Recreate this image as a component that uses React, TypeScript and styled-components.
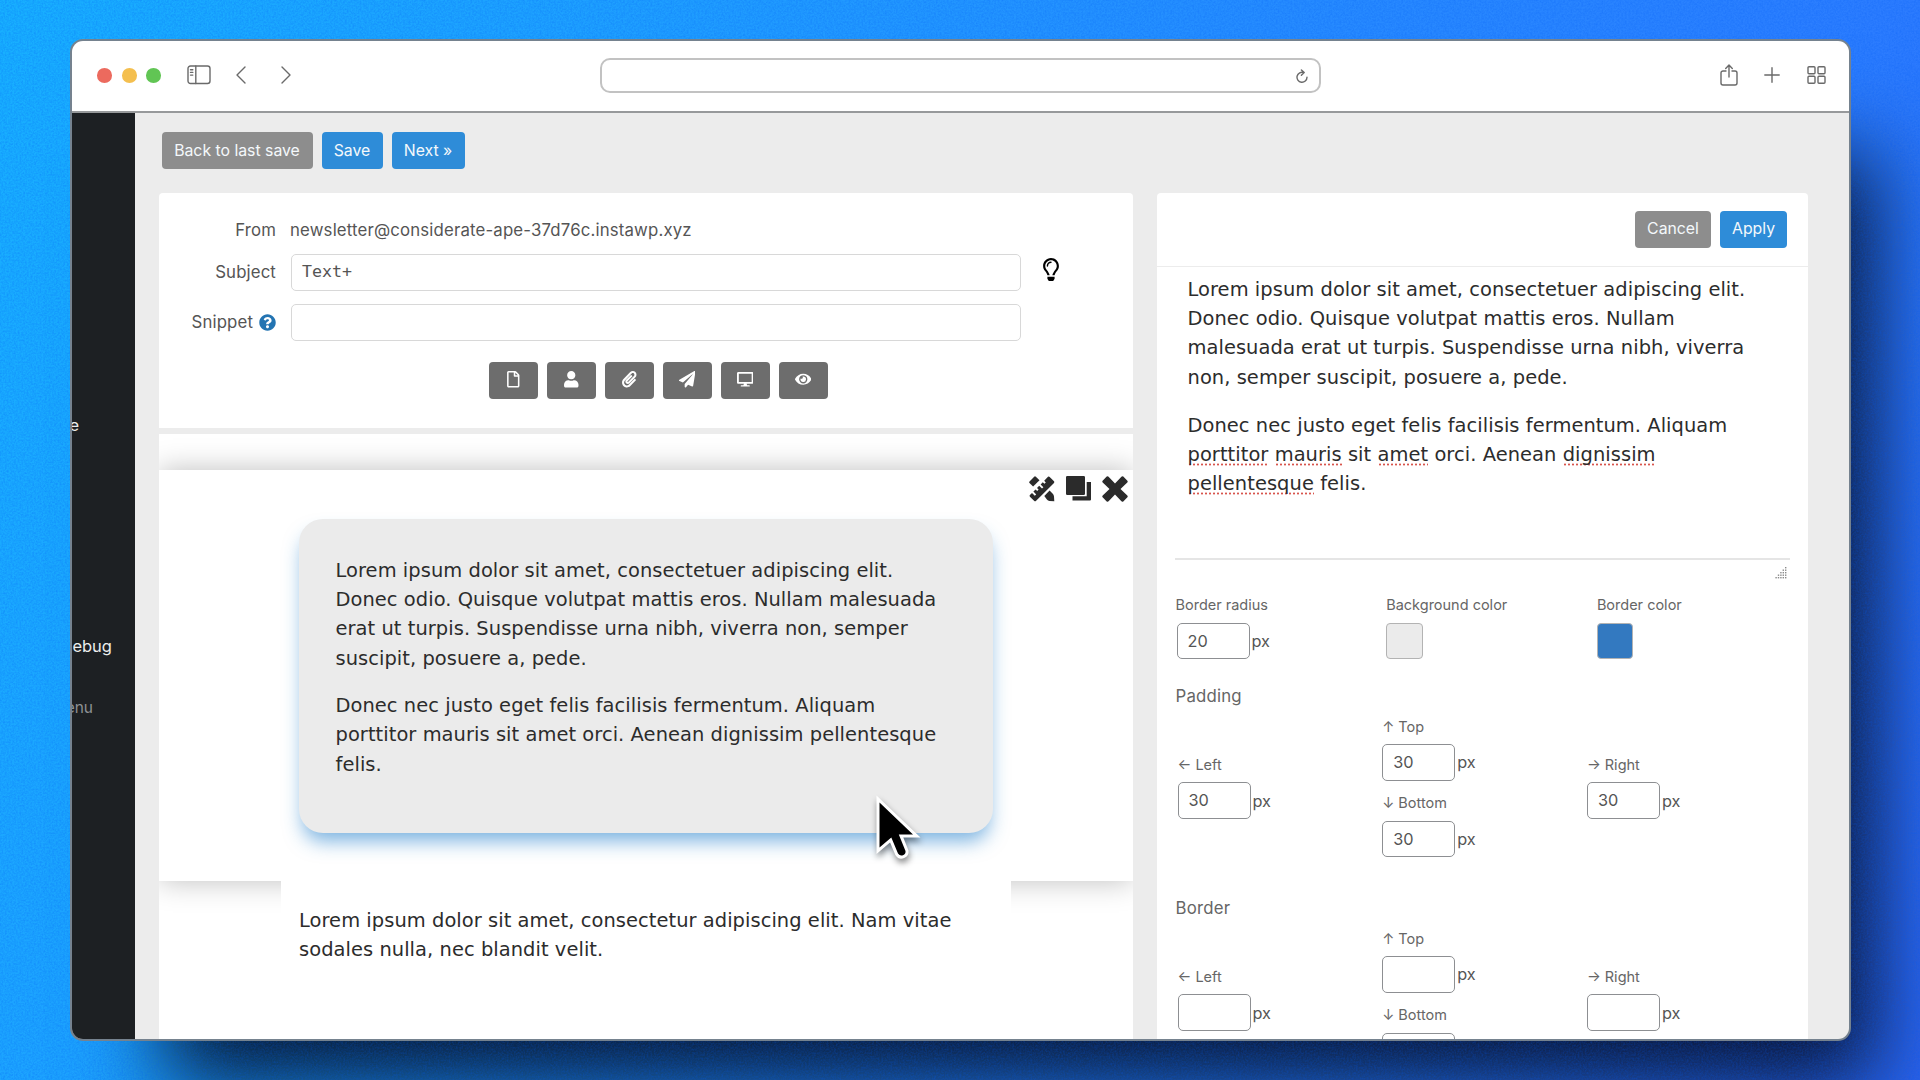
import React from "react";
import styled, { createGlobalStyle, css } from "styled-components";
import {
  FaRegFile,
  FaUser,
  FaPaperclip,
  FaPaperPlane,
  FaDesktop,
  FaEye,
  FaRegLightbulb,
  FaQuestionCircle,
} from "react-icons/fa";

const Global = createGlobalStyle`
  * { box-sizing: border-box; }
  body { margin: 0; overflow: hidden; font-family: Inter, "Liberation Sans", sans-serif; color: #555; }
  p { margin: 0; }
`;

const Desktop = styled.div`
  position: relative;
  width: 1920px;
  height: 1080px;
  padding: 39px 0 0 70px;
  overflow: hidden;
  background: linear-gradient(112deg, #18b0ff 0%, #1f9fff 28%, #278aff 58%, #2c7dff 80%, #2d66f2 100%);
`;

const Grain = styled.svg`
  position: absolute;
  inset: 0;
  width: 1920px;
  height: 1080px;
  opacity: 0.3;
  pointer-events: none;
`;

const Window = styled.div`
  position: relative;
  display: flex;
  flex-direction: column;
  width: 1781px;
  height: 1002px;
  border: 2px solid #75828f;
  border-radius: 13px;
  box-shadow: 58px 80px 80px -36px rgba(4, 8, 24, 0.9);
  background: #75828f;
`;

const TitleBar = styled.header`
  display: flex;
  align-items: center;
  flex: none;
  height: 72px;
  padding: 0 23px 2px 25px;
  background: #fff;
  border-bottom: 2px solid #97999b;
  border-radius: 11px 11px 0 0;
`;

const Lights = styled.div`
  display: flex;
  gap: 9.6px;
  margin: 1px 26px 0 0;
`;

const Light = styled.span<{ $color: string }>`
  width: 15px;
  height: 14.5px;
  border-radius: 50%;
  background: ${(p) => p.$color};
`;

const BarIcon = styled.svg<{ $gap?: number }>`
  flex: none;
  margin-left: ${(p) => p.$gap ?? 0}px;
  fill: none;
  stroke: #6a6a6a;
  stroke-width: 1.4;
  stroke-linecap: round;
  stroke-linejoin: round;
`;

const Address = styled.div`
  display: flex;
  align-items: center;
  justify-content: flex-end;
  width: 721px;
  height: 35px;
  margin: 0 auto 0 308px;
  padding: 2px 10px 0 0;
  border: 2px solid #c2c2c2;
  border-radius: 10px;
`;

const Page = styled.div`
  display: flex;
  flex: 1;
  min-height: 0;
  overflow: hidden;
  background: #ececec;
  border-radius: 0 0 11px 11px;
`;

const Sidebar = styled.nav`
  flex: none;
  width: 63px;
  background: #1d2023;
  overflow: hidden;
  padding-top: 300.5px;
`;

const MenuItem = styled.div<{ $right: number; $gap?: number; $muted?: boolean }>`
  display: flex;
  justify-content: flex-end;
  width: ${(p) => p.$right}px;
  height: 22px;
  line-height: 22px;
  margin-bottom: ${(p) => p.$gap ?? 0}px;
  font-size: ${(p) => (p.$muted ? 15.5 : 16.5)}px;
  color: ${(p) => (p.$muted ? "#8d9194" : "#eceded")};
`;

const Content = styled.main`
  flex: 1;
  min-width: 0;
  padding: 19px 40px 0 24px;
`;

const Actions = styled.div`
  display: flex;
  gap: 9px;
  margin: 0 0 24px 2.5px;
`;

const Button = styled.button<{ $w: number; $muted?: boolean; $drop?: number }>`
  width: ${(p) => p.$w}px;
  height: 37px;
  padding: ${(p) => p.$drop ?? 0}px 0 2px;
  border: 0;
  border-radius: 4px;
  font: 400 15.8px Inter, sans-serif;
  color: #f4f8fb;
  background: ${(p) => (p.$muted ? "#8d8d8d" : "#2e8cd8")};
`;

const Columns = styled.div`
  display: flex;
  gap: 24px;
`;

const LeftColumn = styled.section`
  width: 974px;
  display: flex;
  flex-direction: column;
  gap: 6px;
`;

const Details = styled.div`
  height: 235px;
  padding-top: 19px;
  background: #fff;
  border-radius: 4px 4px 0 0;
`;

const FormRow = styled.div<{ $gap: number }>`
  display: grid;
  grid-template-columns: 117px 730px 1fr;
  column-gap: 15px;
  align-items: center;
  height: 36px;
  margin-bottom: ${(p) => p.$gap}px;
`;

const FormLabel = styled.div`
  display: flex;
  align-items: center;
  justify-content: flex-end;
  gap: 6px;
  font-size: 16.8px;
  letter-spacing: 0.13px;
`;

const Sender = styled.div`
  margin-left: -1px;
  font-size: 16.8px;
  letter-spacing: 0.16px;
`;

const WideInput = styled.div`
  height: 36.5px;
  padding-left: 10px;
  border: 1.5px solid #d8d8d8;
  border-radius: 5px;
  font: 16.6px/34px "DejaVu Sans Mono", monospace;
`;

const Bulb = styled(FaRegLightbulb)`
  width: 16px;
  height: 23px;
  margin: -5px 0 0 7px;
  color: #000;
`;

const IconRow = styled.div`
  display: flex;
  justify-content: center;
  gap: 9px;
  margin: 22px 0 0 24px;
`;

const IconButton = styled.button`
  display: flex;
  justify-content: center;
  width: 49px;
  height: 37px;
  padding: 9px 0 0;
  border: 0;
  border-radius: 4px;
  color: #fff;
  font-size: 16.5px;
  background: #6d6d6d;
`;

const Canvas = styled.div`
  height: 620px;
  padding-top: 36px;
  background: #fff;
  overflow: hidden;
`;

const Block = styled.div`
  height: 411px;
  padding: 6px 5.5px 0 140px;
  background: #fff;
  box-shadow: 0 0 28px rgba(0, 0, 0, 0.26);
`;

const BlockTools = styled.div`
  display: flex;
  justify-content: flex-end;
  gap: 11px;
  height: 43px;
  color: #2b2b2b;
`;

const readingText = css`
  font-family: Verdana, "DejaVu Sans", sans-serif;
  font-size: 19.45px;
  letter-spacing: 0.058px;
  line-height: 29.2px;
  color: #2c2c2c;
  white-space: nowrap;
`;

const Card = styled.div`
  width: 694px;
  height: 313.5px;
  padding: 37px 36.5px;
  border-radius: 24px;
  background: #ebebeb;
  box-shadow: 0 12px 19px -4px rgba(40, 130, 205, 0.62);
  ${readingText}

  p + p { margin-top: 18.4px; }
`;

const PlainBlock = styled.div`
  position: relative;
  width: 730px;
  height: 170px;
  margin-left: 122px;
  padding: 25px 18px;
  background: #fff;
  ${readingText}
`;

const RightColumn = styled.section`
  width: 651px;
  height: 870px;
  background: #fff;
  border-radius: 4px 4px 0 0;
`;

const PanelHead = styled.div`
  display: flex;
  justify-content: flex-end;
  gap: 9px;
  height: 74px;
  padding: 18px 21px 0;
  border-bottom: 1px solid #ececec;
`;

const Editor = styled.div`
  height: 293px;
  margin: 0 18px;
  padding: 8px 0 0 12.5px;
  border-bottom: 2px solid #e5e5e5;
  ${readingText}

  p + p { margin-top: 19.2px; }
`;

const Misspelt = styled.span`
  padding-bottom: 2px;
  background: radial-gradient(circle, #d8554d 0.8px, transparent 1.3px) 0 20px / 4px 3px repeat-x;
`;

const Grip = styled.svg`
  display: block;
  margin: 7px 21px 16px auto;
  fill: #8a8a8a;
`;

const Settings = styled.div`
  padding-left: 18.5px;
`;

const FieldRow = styled.div`
  display: grid;
  grid-template-columns: repeat(3, 210.7px);
  margin-bottom: 25px;
`;

const Label = styled.div`
  height: 20px;
  line-height: 20px;
  margin-bottom: 7.5px;
  font-size: 14.5px;
  color: #666;
  white-space: pre;
`;

const Measure = styled.div<{ $inset?: boolean }>`
  display: flex;
  align-items: center;
  gap: 2px;
  margin-left: ${(p) => (p.$inset ? 1 : 0)}px;
  font-size: 16.3px;
`;

const NumberBox = styled.div`
  width: 73px;
  height: 36.5px;
  padding-left: 10px;
  border: 1.3px solid #8d8f92;
  border-radius: 5px;
  line-height: 34px;
`;

const Swatch = styled.div<{ $color: string }>`
  width: 36.5px;
  height: 36.5px;
  border: 1.3px solid #b3b3b3;
  border-radius: 4px;
  background: ${(p) => p.$color};
`;

const Heading = styled.div`
  height: 24px;
  line-height: 24px;
  margin-bottom: 8.5px;
  font-size: 16.8px;
  letter-spacing: 0.2px;
  color: #666;
`;

const Sides = styled.div`
  display: grid;
  grid-template-columns: repeat(3, 204.7px);
  align-items: center;
  margin: 0 0 39px 2px;
`;

const Middle = styled.div`
  display: grid;
  row-gap: 12.5px;
`;

const Pointer = styled.svg`
  position: absolute;
  left: 870px;
  top: 790px;
  filter: drop-shadow(1px 4px 3px rgba(0, 0, 0, 0.45));
`;

function Side({ label, value }: { label: string; value: string }) {
  return (
    <div>
      <Label>{label}</Label>
      <Measure>
        <NumberBox>{value}</NumberBox>px
      </Measure>
    </div>
  );
}

function SideGroup({ title, value }: { title: string; value: string }) {
  return (
    <>
      <Heading>{title}</Heading>
      <Sides>
        <Side label="← Left" value={value} />
        <Middle>
          <Side label="↑ Top" value={value} />
          <Side label="↓ Bottom" value={value} />
        </Middle>
        <Side label="→ Right" value={value} />
      </Sides>
    </>
  );
}

const tools = [FaRegFile, FaUser, FaPaperclip, FaPaperPlane, FaDesktop, FaEye];

export default function App() {
  return (
    <Desktop>
      <Global />
      <Window>
        <TitleBar>
          <Lights>
            <Light $color="#ec6a5e" />
            <Light $color="#f4bf4f" />
            <Light $color="#61c554" />
          </Lights>
          <BarIcon width="24" height="20" viewBox="0 0 24 20">
            <rect x="1" y="1" width="22" height="17.5" rx="2.5" />
            <path d="M8.8 1v17.5M3.5 4.7h2.3M3.5 7.4h2.3M3.5 10.1h2.3" />
          </BarIcon>
          <BarIcon $gap={24} width="12" height="20" viewBox="0 0 12 20" strokeWidth="1.7">
            <path d="M10 2 2 10l8 8" />
          </BarIcon>
          <BarIcon $gap={33} width="12" height="20" viewBox="0 0 12 20" strokeWidth="1.7">
            <path d="m2 2 8 8-8 8" />
          </BarIcon>
          <Address>
            <BarIcon width="14" height="15" viewBox="0 0 14 15">
              <path d="M8.8 3.6A5 5 0 1 0 12 8.3M6.4.9l2.8 2.7-2.8 2.6" />
            </BarIcon>
          </Address>
          <BarIcon width="18" height="22" viewBox="0 0 18 22">
            <path d="M6 7H3a2 2 0 0 0-2 2v10a2 2 0 0 0 2 2h12a2 2 0 0 0 2-2V9a2 2 0 0 0-2-2h-3M9 13V1.2M5.7 4.4 9 1l3.3 3.4" />
          </BarIcon>
          <BarIcon $gap={26} width="16" height="16" viewBox="0 0 16 16">
            <path d="M8 .8v14.4M.8 8h14.4" />
          </BarIcon>
          <BarIcon $gap={27} width="19" height="18" viewBox="0 0 19 18">
            <rect x="1" y=".8" width="7" height="7" rx="1" />
            <rect x="11" y=".8" width="7" height="7" rx="1" />
            <rect x="1" y="10.2" width="7" height="7" rx="1" />
            <rect x="11" y="10.2" width="7" height="7" rx="1" />
          </BarIcon>
        </TitleBar>
        <Page>
          <Sidebar>
            <MenuItem $right={7} $gap={199}>e</MenuItem>
            <MenuItem $right={40} $gap={40}>ebug</MenuItem>
            <MenuItem $right={21} $muted>enu</MenuItem>
          </Sidebar>
          <Content>
            <Actions>
              <Button $w={151} $drop={1} $muted>Back to last save</Button>
              <Button $w={61} $drop={1}>Save</Button>
              <Button $w={73} $drop={1}>Next »</Button>
            </Actions>
            <Columns>
              <LeftColumn>
                <Details>
                  <FormRow $gap={6}>
                    <FormLabel>From</FormLabel>
                    <Sender>newsletter@considerate-ape-37d76c.instawp.xyz</Sender>
                  </FormRow>
                  <FormRow $gap={14}>
                    <FormLabel>Subject</FormLabel>
                    <WideInput>Text+</WideInput>
                    <Bulb />
                  </FormRow>
                  <FormRow $gap={0}>
                    <FormLabel>
                      Snippet <FaQuestionCircle size={17} color="#2374b2" />
                    </FormLabel>
                    <WideInput />
                  </FormRow>
                  <IconRow>
                    {tools.map((Icon, i) => (
                      <IconButton key={i}>
                        <Icon />
                      </IconButton>
                    ))}
                  </IconRow>
                </Details>
                <Canvas>
                  <Block>
                    <BlockTools>
                      <svg width="26" height="26" viewBox="0 0 26 26" fill="currentColor">
                        <path d="M.5 5.400 5.200.7Q6 0 6.900.7L10.500 4.200 4.100 10.600.5 7Q-.1 6.200.5 5.400Z" />
                        <path d="M15.300 19.900 20.600 14.600 24 17.900Q24.900 18.900 25 20.400L25.300 25.300 20.500 25Q18.900 24.900 17.900 23.500Z" />
                        <path d="M19 .8Q19.900.2 20.700.9L25 5.300Q25.700 6.100 25 6.900L6.900 25Q6.100 25.700 5.300 25L.9 20.700Q.2 19.900.9 19.100L3 17 5.800 19.800 7.200 18.400 4.400 15.600 6.600 13.400 8.200 15 9.600 13.600 8 12 10.200 9.800 13 12.600 14.400 11.200 11.600 8.400 13.800 6.200 15.400 7.800 16.800 6.400 15.200 4.800Z" />
                      </svg>
                      <svg width="25" height="25" viewBox="0 0 25 25" fill="currentColor">
                        <path d="M1.2 0h16.6Q19 0 19 1.200v16.6q0 1.200-1.200 1.200H1.200Q0 19 0 17.800V1.200Q0 0 1.200 0ZM20.700 6h4.300v17.500q0 1-1 1H6.500v-4.200h14.200Z" />
                      </svg>
                      <svg width="26" height="26" viewBox="0 0 26 26" fill="currentColor">
                        <path d="M.6 4.700 4.700.6Q5.700-.1 6.600.7L13 7.500 19.400.7Q20.300-.1 21.300.6l4.100 4.100q.7 1-.1 1.900L18.500 13l6.800 6.400q.8.900.1 1.900l-4.100 4.100q-1 .7-1.900-.1L13 18.500l-6.400 6.800q-.9.800-1.900.1L.6 21.300Q-.1 20.300.7 19.400L7.500 13 .7 6.600Q-.1 5.700.6 4.700Z" />
                      </svg>
                    </BlockTools>
                    <Card>
                      <p>
                        Lorem ipsum dolor sit amet, consectetuer adipiscing elit.<br />
                        Donec odio. Quisque volutpat mattis eros. Nullam malesuada<br />
                        erat ut turpis. Suspendisse urna nibh, viverra non, semper<br />
                        suscipit, posuere a, pede.
                      </p>
                      <p>
                        Donec nec justo eget felis facilisis fermentum. Aliquam<br />
                        porttitor mauris sit amet orci. Aenean dignissim pellentesque<br />
                        felis.
                      </p>
                    </Card>
                  </Block>
                  <PlainBlock>
                    <p>
                      Lorem ipsum dolor sit amet, consectetur adipiscing elit. Nam vitae<br />
                      sodales nulla, nec blandit velit.
                    </p>
                  </PlainBlock>
                </Canvas>
              </LeftColumn>
              <RightColumn>
                <PanelHead>
                  <Button $w={76} $muted>Cancel</Button>
                  <Button $w={67}>Apply</Button>
                </PanelHead>
                <Editor>
                  <p>
                    Lorem ipsum dolor sit amet, consectetuer adipiscing elit.<br />
                    Donec odio. Quisque volutpat mattis eros. Nullam<br />
                    malesuada erat ut turpis. Suspendisse urna nibh, viverra<br />
                    non, semper suscipit, posuere a, pede.
                  </p>
                  <p>
                    Donec nec justo eget felis facilisis fermentum. Aliquam<br />
                    <Misspelt>porttitor</Misspelt> <Misspelt>mauris</Misspelt> sit <Misspelt>amet</Misspelt> orci. Aenean{" "}
                    <Misspelt>dignissim</Misspelt><br />
                    <Misspelt>pellentesque</Misspelt> felis.
                  </p>
                </Editor>
                <Grip width="12" height="12" viewBox="0 0 12 12">
                  {[0, 1, 2, 3, 4].flatMap((r) =>
                    Array.from({ length: r + 1 }, (_, c) => (
                      <rect key={`${r}-${c}`} x={10 - c * 2.4} y={r * 2.5} width="1.4" height="1.4" />
                    ))
                  )}
                </Grip>
                <Settings>
                  <FieldRow>
                    <div>
                      <Label>Border radius</Label>
                      <Measure $inset>
                        <NumberBox>20</NumberBox>px
                      </Measure>
                    </div>
                    <div>
                      <Label>Background color</Label>
                      <Swatch $color="#ebebeb" />
                    </div>
                    <div>
                      <Label>Border color</Label>
                      <Swatch $color="#3379c0" />
                    </div>
                  </FieldRow>
                  <SideGroup title="Padding" value="30" />
                  <SideGroup title="Border" value="" />
                </Settings>
              </RightColumn>
            </Columns>
          </Content>
        </Page>
      </Window>
      <Grain>
        <filter id="grain">
          <feTurbulence type="fractalNoise" baseFrequency="0.55" numOctaves="2" seed="4" />
          <feColorMatrix values="0 0 0 0 0  0 0 0 0 0.1  0 0 0 0 0.9  1.6 0 0 0 -0.5" />
        </filter>
        <clipPath id="backdrop">
          <path clipRule="evenodd" d="M0 0H1920V1080H0ZM70 52V1028Q70 1041 83 1041H1838Q1851 1041 1851 1028V52Q1851 39 1838 39H83Q70 39 70 52Z" />
        </clipPath>
        <g clipPath="url(#backdrop)">
          <rect width="1920" height="1080" filter="url(#grain)" />
        </g>
      </Grain>
      <Pointer width="56" height="80" viewBox="0 0 56 80">
        <path
          d="M9.500 12.500V57.500L21.300 47.500 28 63.500Q30 66.500 33 65.200T35.500 61L28.800 44.500H43Z"
          fill="#000"
          stroke="#fff"
          strokeWidth="6"
          paintOrder="stroke"
        />
      </Pointer>
    </Desktop>
  );
}
